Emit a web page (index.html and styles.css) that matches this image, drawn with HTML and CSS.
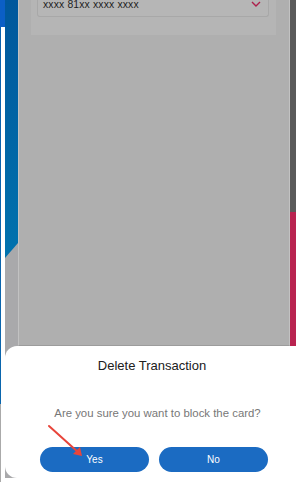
FILE: index.html
```html
<!DOCTYPE html>
<html>
<head>
<meta charset="utf-8">
<link rel="stylesheet" href="styles.css">
</head>
<body>
<div class="page">
  <div class="edge">
    <div class="edge-top"></div>
    <div class="edge-rest">
      <div class="edge-line"></div>
    </div>
  </div>
  <div class="screen">
    <div class="lband"><div class="lband-blue"></div></div>
    <div class="main">
      <div class="content">
        <div class="card">
          <div class="field">
            <span class="card-no">xxxx 81xx xxxx xxxx</span>
            <svg class="chev" width="10" height="6" viewBox="0 0 10 6"><path d="M1 1 L5 5 L9 1" fill="none" stroke="#ad1f4b" stroke-width="1.4"/></svg>
          </div>
        </div>
      </div>
    </div>
    <div class="rband"><div class="rband-dark"></div><div class="rband-red"></div></div>

    <div class="sheet">
      <div class="sheet-title">Delete Transaction</div>
      <div class="sheet-msg">Are you sure you want to block the card?</div>
      <div class="sheet-actions">
        <button class="btn">Yes</button>
        <button class="btn">No</button>
      </div>
    </div>
    <svg class="arrow" width="50" height="40" viewBox="0 0 50 40">
      <line x1="3" y1="4" x2="33" y2="31" stroke="#e8453b" stroke-width="2" stroke-linecap="round"/>
      <path d="M36 34 L27 32 L34 25 Z" fill="#e8453b"/>
    </svg>
  </div>
</div>
</body>
</html>
```
FILE: styles.css
```css
* { box-sizing: border-box; }
html, body { margin: 0; padding: 0; background: #ffffff; }
body { width: 296px; height: 482px; overflow: hidden; font-family: "Liberation Sans", Arial, sans-serif; }
.page { display: flex; width: 296px; height: 482px; }

.edge { width: 5px; display: flex; flex-direction: column; }
.edge-top { height: 27px; background: #0b5fc6; }
.edge-rest { flex: 1; background: #ffffff; }
.edge-line { width: 1px; height: 100%; background: linear-gradient(to bottom, #0a62ad 0, #0a66ad 377px, #aaaaaa 377px); }

.screen { position: relative; flex: 1; display: flex; height: 482px; }

.lband { width: 13px; height: 478px; background: #a9a9ab; }
.lband-blue { height: 258px; background: linear-gradient(to bottom, #00579c, #0072ae); clip-path: polygon(0 0, 100% 0, 100% 243px, 0 258px); }

.main { flex: 1; display: flex; flex-direction: column; }
.content { height: 346px; background: #afafaf; border-left: 1px solid #c2c2c2; border-right: 1px solid #c2c2c2; border-bottom: 1px solid #9c9c9c; overflow: hidden; }
.card { margin: -20px 13px 0 12px; height: 55px; background: #b5b5b5; padding: 0 7px 0 6px; }
.field { height: 37px; border: 1px solid #a8a8a8; border-top: none; border-radius: 0 0 3px 3px; background: #b6b6b6; display: flex; align-items: flex-end; justify-content: space-between; padding: 0 7px 6px 5px; }
.card-no { font-size: 10.4px; line-height: 10px; color: #1e1e1e; letter-spacing: 0.15px; }
.chev { margin-bottom: 3px; }

.rband { width: 6px; display: flex; flex-direction: column; }
.rband-dark { height: 212px; background: #5a5a5a; }
.rband-red { height: 134px; background: #b92350; }

.sheet { position: absolute; left: 0; top: 346px; width: 294px; height: 132px; background: #ffffff; border-radius: 12px; display: flex; flex-direction: column; align-items: center; padding-top: 12px; }
.sheet-title { font-size: 13px; line-height: 16px; color: #202020; }
.sheet-msg { margin-top: 31px; margin-left: 11px; font-size: 11.4px; line-height: 16px; color: #777777; }
.sheet-actions { margin-top: 26px; display: flex; gap: 10px; margin-left: 4px; }
.btn { width: 109px; height: 25px; border: none; border-radius: 13px; background: #1b6bc2; color: #ffffff; font-family: "Liberation Sans", Arial, sans-serif; font-size: 10px; padding: 0; }

.arrow { position: absolute; left: 41px; top: 422px; }
```
